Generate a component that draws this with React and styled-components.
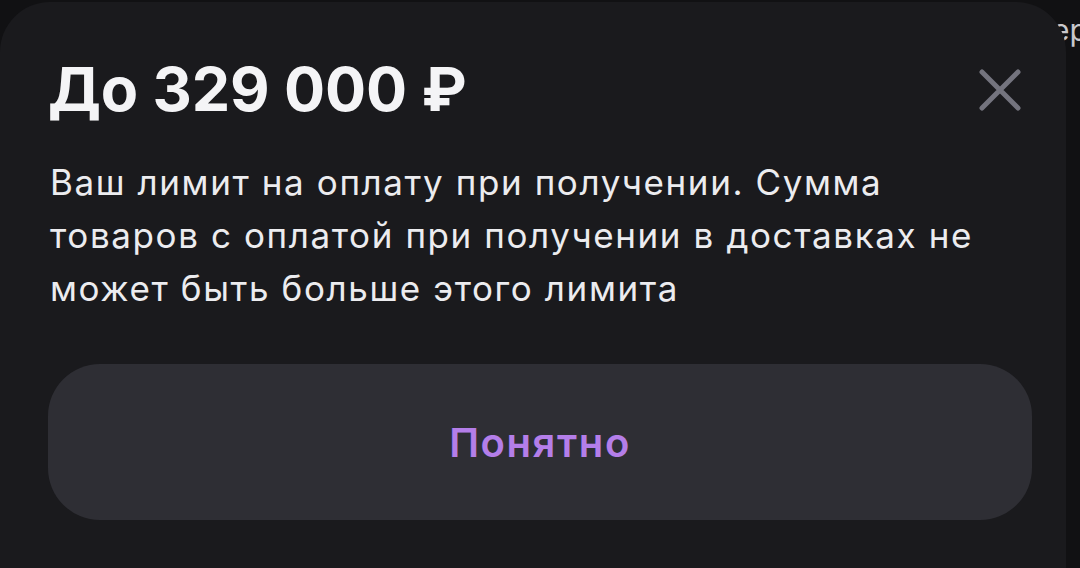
import React from "react";
import styled, { createGlobalStyle } from "styled-components";

const Global = createGlobalStyle`
  html, body { margin: 0; padding: 0; background: #111113; }
  body { font-family: Inter, "Noto Sans", sans-serif; -webkit-font-smoothing: antialiased; }
  #root { width: 1080px; height: 568px; overflow: hidden; }
`;

const Screen = styled.div`
  position: relative;
  width: 1080px;
  height: 568px;
  background: #111113;
  overflow: hidden;
  display: flex;
  padding-top: 2px;
  box-sizing: border-box;
`;

const BehindText = styled.span`
  position: absolute;
  left: 1052px;
  top: 12px;
  font-size: 30px;
  color: #c8c8cc;
  font-family: Inter, sans-serif;
`;

const Sheet = styled.section`
  position: relative;
  z-index: 1;
  width: 1066px;
  background: #1a1a1d;
  border-radius: 50px 50px 0 0;
  padding: 52px 48px 0 48px;
  box-sizing: border-box;
  display: flex;
  flex-direction: column;
`;

const Header = styled.div`
  display: flex;
  align-items: center;
  justify-content: space-between;
`;

const Title = styled.h1`
  margin: 0;
  font-size: 61px;
  line-height: 70px;
  font-weight: 700;
  color: #f4f4f6;
  letter-spacing: -0.1px;
`;

const CloseButton = styled.button`
  background: none;
  border: 0;
  padding: 0;
  margin-right: -6px;
  margin-top: 2px;
  width: 48px;
  height: 48px;
  display: flex;
  align-items: center;
  justify-content: center;
  cursor: pointer;
`;

const Description = styled.p`
  margin: 32px 0 0 2px;
  font-size: 35px;
  line-height: 53px;
  font-weight: 400;
  letter-spacing: 1.6px;
  color: #ececef;
  max-width: 960px;
`;

const ActionButton = styled.button`
  margin-top: 49px;
  width: 984px;
  height: 156px;
  border: 0;
  border-radius: 52px;
  background: #2e2e34;
  color: #b47ee9;
  font-family: Inter, "Noto Sans", sans-serif;
  font-size: 40px;
  font-weight: 600;
  letter-spacing: 1.6px;
  cursor: pointer;
`;

export default function App() {
  return (
    <>
      <Global />
      <Screen>
        <BehindText>ер</BehindText>
        <Sheet>
          <Header>
            <Title>До 329 000 ₽</Title>
            <CloseButton aria-label="Закрыть">
              <svg width="44" height="44" viewBox="0 0 44 44">
                <path d="M4 4 L40 40 M40 4 L4 40" stroke="#74747e" strokeWidth="5" strokeLinecap="round" />
              </svg>
            </CloseButton>
          </Header>
          <Description>
            Ваш лимит на оплату при получении. Сумма товаров с оплатой при получении в доставках не может быть больше этого лимита
          </Description>
          <ActionButton>Понятно</ActionButton>
        </Sheet>
      </Screen>
    </>
  );
}
